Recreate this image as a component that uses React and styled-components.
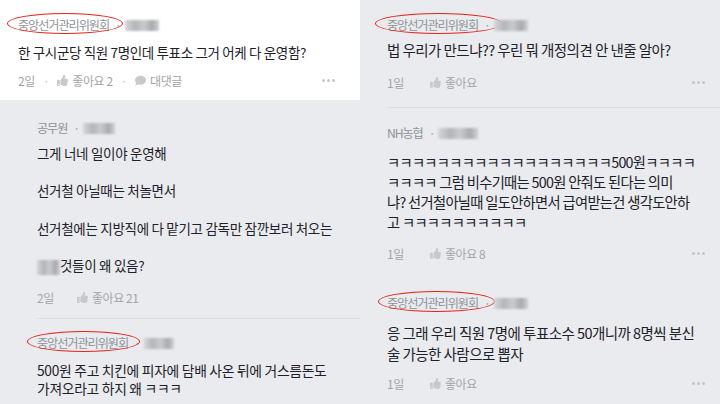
import React from "react";
import styled, { createGlobalStyle } from "styled-components";
import { FaThumbsUp, FaComment } from "react-icons/fa";

const GlobalStyle = createGlobalStyle`
  html, body {
    margin: 0;
    padding: 0;
  }
  body {
    width: 720px;
    height: 404px;
    overflow: hidden;
    background: #e9ebee;
    font-family: "Noto Sans CJK KR", "Noto Sans", sans-serif;
  }
`;

const Page = styled.div`
  display: grid;
  grid-template-columns: 360px 360px;
  height: 404px;
  overflow: hidden;
`;

const Column = styled.div`
  display: flex;
  flex-direction: column;
  background: #e9ebee;
  overflow: hidden;
`;

const TopCard = styled.div`
  background: #ffffff;
  height: 100px;
  box-sizing: border-box;
  padding: 17px 18px 0;
`;

const Block = styled.div`
  padding: ${(p) => p.$pad};
`;

const Author = styled.div`
  position: relative;
  display: flex;
  align-items: center;
  height: 16px;
  font-size: 12.2px;
  letter-spacing: -1.1px;
  color: #8f9399;
  white-space: nowrap;
`;

const Circle = styled.span`
  position: absolute;
  left: ${(p) => p.$left}px;
  top: -4px;
  width: ${(p) => p.$w}px;
  height: 21px;
  border: 1.6px solid #e3231c;
  border-radius: 50%;
  box-sizing: border-box;
`;

const Dot = styled.span`
  margin: 0 4px 0 6px;
  color: #a4a7ac;
`;

const Blur = styled.span`
  display: inline-block;
  width: ${(p) => p.$w}px;
  height: ${(p) => p.$h || 11}px;
  background: linear-gradient(
    90deg,
    #d4d6da 0%,
    #b3b5ba 30%,
    #c9cbcf 55%,
    #a8aaaf 80%,
    #d0d2d6 100%
  );
  filter: blur(1px);
  vertical-align: middle;
`;

const Body = styled.div`
  margin-top: ${(p) => p.$mt}px;
  font-size: ${(p) => p.$size}px;
  letter-spacing: ${(p) => p.$ls}px;
  line-height: ${(p) => p.$lh}px;
  color: #1d2129;
  white-space: nowrap;
`;

const Para = styled.p`
  margin: 0 0 ${(p) => p.$gap}px;
  &:last-child {
    margin-bottom: 0;
  }
`;

const Meta = styled.div`
  display: flex;
  align-items: center;
  height: 16px;
  margin-top: ${(p) => p.$mt}px;
  font-size: 12px;
  letter-spacing: -0.4px;
  color: #a2a5aa;
  white-space: nowrap;
`;

const Time = styled.span`
  margin-right: ${(p) => p.$mr}px;
`;

const Sep = styled.span`
  margin: 0 8px;
  color: #c3c5c9;
`;

const Action = styled.span`
  display: inline-flex;
  align-items: center;
  gap: 4px;
  svg {
    width: 11px;
    height: 11px;
    color: #c6c9ce;
  }
`;

const More = styled.span`
  margin-left: auto;
  margin-right: ${(p) => p.$mr}px;
  display: inline-flex;
  gap: 2px;
  span {
    width: 3px;
    height: 3px;
    border-radius: 50%;
    background: #c3c6cb;
  }
`;

const Divider = styled.div`
  height: 1px;
  margin-top: ${(p) => p.$mt}px;
  background: #dcdee2;
`;

const Dots = ({ mr }) => (
  <More $mr={mr}>
    <span />
    <span />
    <span />
  </More>
);

const Name = ({ children, circle, blur }) => (
  <Author>
    {circle && <Circle $left={circle[0]} $w={circle[1]} />}
    {children}
    <Dot>·</Dot>
    <Blur $w={blur} />
  </Author>
);

export default function App() {
  return (
    <>
      <GlobalStyle />
      <Page>
        <Column>
          <TopCard>
            <Name circle={[-11, 116]} blur={34}>
              중앙선거관리위원회
            </Name>
            <Body $mt={9} $size={13.5} $ls={-0.35} $lh={20}>
              한 구시군당 직원 7명인데 투표소 그거 어케 다 운영함?
            </Body>
            <Meta $mt={10}>
              <Time>2일</Time>
              <Sep>·</Sep>
              <Action>
                <FaThumbsUp />
                좋아요 2
              </Action>
              <Sep>·</Sep>
              <Action>
                <FaComment />
                대댓글
              </Action>
              <Dots mr={7} />
            </Meta>
          </TopCard>

          <Block $pad="20px 0 0 37px">
            <Name blur={32}>공무원</Name>
            <Body $mt={7.5} $size={13.5} $ls={-0.3} $lh={19}>
              <Para $gap={18.5}>그게 너네 일이야 운영해</Para>
              <Para $gap={18.5}>선거철 아닐때는 처놀면서</Para>
              <Para $gap={18.5}>
                선거철에는 지방직에 다 맡기고 감독만 잠깐보러 처오는
              </Para>
              <Para $gap={18.5}>
                <Blur $w={23} $h={15} />
                것들이 왜 있음?
              </Para>
            </Body>
            <Meta $mt={14}>
              <Time $mr={23}>2일</Time>
              <Action>
                <FaThumbsUp />
                좋아요 21
              </Action>
            </Meta>
            <Divider $mt={13} />
          </Block>

          <Block $pad="16px 0 0 37px">
            <Name circle={[-10, 113]} blur={30}>
              중앙선거관리위원회
            </Name>
            <Body $mt={10} $size={13.8} $ls={-0.3} $lh={18}>
              500원 주고 치킨에 피자에 담배 사온 뒤에 거스름돈도
              <br />
              가져오라고 하지 왜 ㅋㅋㅋ
            </Body>
          </Block>
        </Column>

        <Column>
          <Block $pad="17px 0 0 27px">
            <Name circle={[-12, 127]} blur={34}>
              중앙선거관리위원회
            </Name>
            <Body $mt={7} $size={14.5} $ls={-0.55} $lh={20}>
              법 우리가 만드냐?? 우린 뭐 개정의견 안 낸줄 알아?
            </Body>
            <Meta $mt={14}>
              <Time $mr={26}>1일</Time>
              <Action>
                <FaThumbsUp />
                좋아요
              </Action>
              <Dots mr={15} />
            </Meta>
            <Divider $mt={17} />
          </Block>

          <Block $pad="17px 0 0 27px">
            <Name blur={40}>NH농협</Name>
            <Body $mt={11} $size={14.3} $ls={-0.7} $lh={20}>
              ㅋㅋㅋㅋㅋㅋㅋㅋㅋㅋㅋㅋㅋㅋㅋㅋㅋㅋ500원ㅋㅋㅋㅋ
              <br />
              ㅋㅋㅋㅋ 그럼 비수기때는 500원 안줘도 된다는 의미
              <br />
              냐? 선거철아닐때 일도안하면서 급여받는건 생각도안하
              <br />고 ㅋㅋㅋㅋㅋㅋㅋㅋㅋㅋ
            </Body>
            <Meta $mt={13}>
              <Time $mr={26}>1일</Time>
              <Action>
                <FaThumbsUp />
                좋아요 8
              </Action>
              <Dots mr={15} />
            </Meta>
          </Block>

          <Block $pad="34px 0 0 27px">
            <Name circle={[-9, 117]} blur={34}>
              중앙선거관리위원회
            </Name>
            <Body $mt={10.5} $size={14.5} $ls={-0.55} $lh={21}>
              응 그래 우리 직원 7명에 투표소수 50개니까 8명씩 분신
              <br />술 가능한 사람으로 뽑자
            </Body>
            <Meta $mt={11.5}>
              <Time $mr={26}>1일</Time>
              <Action>
                <FaThumbsUp />
                좋아요
              </Action>
              <Dots mr={15} />
            </Meta>
          </Block>
        </Column>
      </Page>
    </>
  );
}
